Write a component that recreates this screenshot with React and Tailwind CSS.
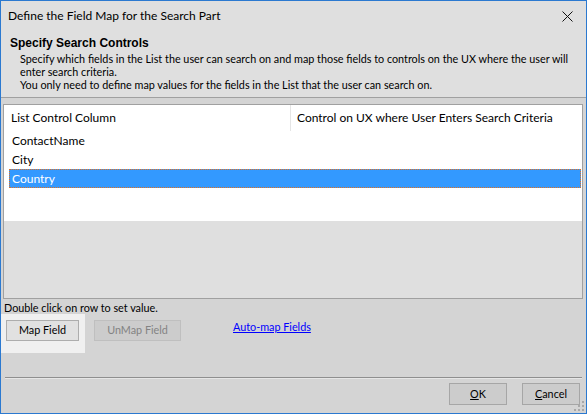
import React from "react";

const rows = ["ContactName", "City", "Country"];

function Grip() {
  const dots = [
    [8, 0],
    [4, 4],
    [8, 4],
    [0, 8],
    [4, 8],
    [8, 8],
  ];
  return (
    <svg width="11" height="11" viewBox="0 0 11 11">
      {dots.map(([x, y], i) => (
        <rect key={i} x={x} y={y} width="2" height="2" fill="#a8a8a8" />
      ))}
    </svg>
  );
}

export default function App() {
  return (
    <div
      className="w-[587px] h-[414px] bg-[#d4d4d4] text-[10.8px] text-black border border-[#2b79d0] flex flex-col relative overflow-hidden whitespace-nowrap"
      style={{ fontFamily: 'Lato, "Liberation Sans", sans-serif' }}
    >
      {/* title bar */}
      <div className="h-[30px] bg-[#dfdfdf] flex items-center justify-between pl-[7px] pr-[13px] text-[12px]">
        <span>Define the Field Map for the Search Part</span>
        <svg width="11" height="11" viewBox="0 0 11 11">
          <path d="M0.5 0.5 L10.5 10.5 M10.5 0.5 L0.5 10.5" stroke="#111" strokeWidth="1" />
        </svg>
      </div>

      {/* header */}
      <div className="h-[67px] bg-[#dfdfdf] border-b border-[#a0a0a0] pt-[5px] pl-[9px] leading-[13px]">
        <div
          className="font-bold text-[12px] leading-[15px]"
          style={{ fontFamily: '"Liberation Sans", Arial, sans-serif' }}
        >
          Specify Search Controls
        </div>
        <div className="pl-[10px] pt-[1px]">
          Specify which fields in the List the user can search on and map those fields to controls on the UX where the user will
          <br />
          enter search criteria.
          <br />
          You only need to define map values for the fields in the List that the user can search on.
        </div>
      </div>

      {/* list */}
      <div className="pt-[6px] pl-[2px] pr-[3px]">
        <div className="h-[195px] border border-[#a0a0a0] flex flex-col bg-[#dfdfdf] text-[12px]">
          <div className="h-[116px] bg-white flex flex-col">
            <div className="h-[26px] flex items-center">
              <div className="w-[287px] h-full pl-[7px] flex items-center border-r border-[#e5e5e5]">
                List Control Column
              </div>
              <div className="flex-1 pl-[6px]">Control on UX where User Enters Search Criteria</div>
            </div>
            {rows.map((r) => (
              <div key={r} className="h-[19px] pl-[5px] pr-[1px]">
                <div
                  className={
                    r === "Country"
                      ? "h-full bg-[#3399ff] text-white border border-dotted border-[#e07020] pl-[2px] flex items-center"
                      : "h-full pl-[3px] flex items-center"
                  }
                >
                  {r}
                </div>
              </div>
            ))}
          </div>
        </div>
      </div>

      {/* hint + buttons */}
      <div className="h-[15px] pl-[3px] pt-[3px] flex items-center">Double click on row to set value.</div>
      <div className="flex items-start">
        <div className="w-[84px] h-[39px] bg-[#f0f0f0] pl-[5px] pt-[6px]">
          <button className="w-[73px] h-[21px] bg-[#e1e1e1] border border-[#adadad] flex items-center justify-center">
            Map Field
          </button>
        </div>
        <button className="ml-[9px] mt-[6px] w-[87px] h-[21px] bg-[#cccccc] border border-[#bfbfbf] text-[#838383] flex items-center justify-center">
          UnMap Field
        </button>
        <a className="ml-[52px] mt-[5px] text-[#0000ff] underline">Auto-map Fields</a>
      </div>

      {/* footer */}
      <div className="mt-auto px-[4px]">
        <div className="border-t border-[#8f8f8f] border-b border-b-[#e6e6e6]"></div>
      </div>
      <div className="h-[34px] flex justify-end items-start pt-[4px] pr-[6px] gap-[15px]">
        <button className="w-[58px] h-[22px] bg-[#cccccc] border border-[#a6a6a6] flex items-center justify-center">
          <span>
            <span className="underline">O</span>K
          </span>
        </button>
        <button className="w-[58px] h-[22px] bg-[#cccccc] border border-[#a6a6a6] flex items-center justify-center">
          <span>
            <span className="underline">C</span>ancel
          </span>
        </button>
      </div>
      <div className="absolute right-[1px] bottom-[1px]">
        <Grip />
      </div>
    </div>
  );
}
